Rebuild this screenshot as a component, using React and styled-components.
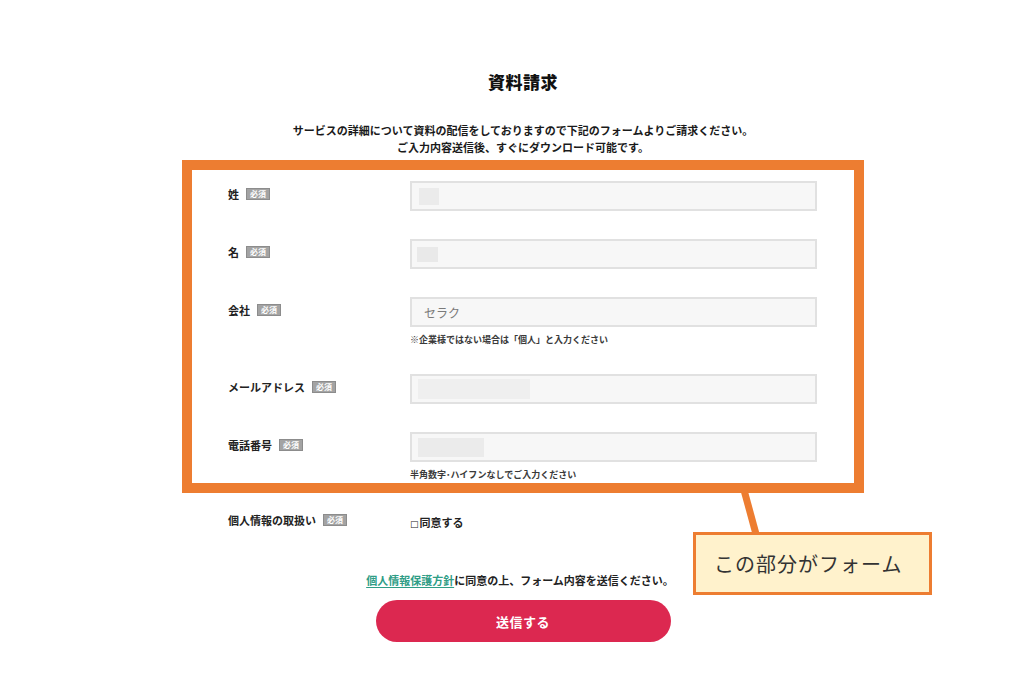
import React from "react";
import styled, { createGlobalStyle } from "styled-components";

const Global = createGlobalStyle`
  html, body { margin: 0; padding: 0; background: #fff; }
  body { font-family: "Noto Sans CJK JP", "Noto Sans", sans-serif; color: #222; }
`;

const ORANGE = "#ed7d31";

const Page = styled.div`
  position: relative;
  width: 1024px;
  height: 673px;
  overflow: hidden;
  background: #fff;
`;

const Column = styled.div`
  width: 682px;
  margin-left: 182px;
  display: flex;
  flex-direction: column;
`;

const Title = styled.h1`
  margin: 70px 0 0;
  height: 24px;
  font-size: 17px;
  line-height: 24px;
  font-weight: 900;
  letter-spacing: 0.5px;
  text-align: center;
  color: #111;
`;

const Lead = styled.p`
  margin: 28px 0 0;
  font-size: 11px;
  line-height: 17px;
  font-weight: 700;
  text-align: center;
  color: #1a1a1a;
`;

const Frame = styled.section`
  margin-top: 4px;
  box-sizing: border-box;
  width: 682px;
  border: 10px solid ${ORANGE};
  padding: 11px 37px 2px 36px;
  display: flex;
  flex-direction: column;
  gap: 28px;
`;

const FieldRow = styled.div`
  display: grid;
  grid-template-columns: 182px 407px;
  align-items: start;
  padding-left: ${(p) => (p.$outside ? "46px" : "0")};
  margin-top: ${(p) => (p.$outside ? "19px" : "0")};
`;

const Label = styled.div`
  display: flex;
  align-items: center;
  gap: 7px;
  padding-top: ${(p) => (p.$flush ? "0" : "5px")};
  font-size: 11px;
  line-height: 16px;
  font-weight: 700;
  color: #222;
`;

const Badge = styled.span`
  display: inline-flex;
  align-items: center;
  justify-content: center;
  box-sizing: border-box;
  width: 24px;
  height: 12px;
  font-size: 8px;
  line-height: 10px;
  font-weight: 700;
  color: #fff;
  background: #a3a3a3;
  border: 1px solid #8c8c8c;
`;

const InputCol = styled.div`
  display: flex;
  flex-direction: column;
`;

const Field = styled.div`
  box-sizing: border-box;
  height: 30px;
  border: 2px solid #e1e1e1;
  background: #f7f7f7;
  display: flex;
  align-items: center;
  padding-left: ${(p) => p.$pad || "7px"};
  font-size: 12px;
  color: #7a7a7a;
`;

const Redact = styled.span`
  display: block;
  width: ${(p) => p.$w}px;
  height: ${(p) => p.$h}px;
  background: ${(p) => p.$c || "#ebebeb"};
  filter: blur(0.6px);
`;

const Note = styled.div`
  margin-top: 6px;
  font-size: 9px;
  line-height: 13px;
  font-weight: 700;
  color: #3a3a3a;
`;

const Agree = styled.div`
  padding-top: 2px;
  font-size: 11px;
  line-height: 16px;
  font-weight: 700;
  color: #222;
`;

const Box = styled.span`
  font-family: "DejaVu Sans", sans-serif;
  font-size: 9px;
  font-weight: 400;
  margin-right: 1px;
`;

const Consent = styled.p`
  margin: 40px 0 0;
  padding-right: 6px;
  font-size: 11px;
  line-height: 16px;
  font-weight: 700;
  text-align: center;
  color: #222;
`;

const PolicyLink = styled.a`
  color: #2f9d86;
  text-decoration: underline;
  text-underline-offset: 2px;
`;

const Submit = styled.button`
  align-self: center;
  margin-top: 12px;
  width: 295px;
  height: 42px;
  border: none;
  border-radius: 21px;
  background: #dc2850;
  color: #fff;
  font-family: "Noto Sans CJK JP", sans-serif;
  font-size: 13px;
  font-weight: 700;
  letter-spacing: 0.5px;
  cursor: pointer;
`;

const Connector = styled.svg`
  position: absolute;
  left: 730px;
  top: 488px;
  width: 40px;
  height: 48px;
`;

const Callout = styled.div`
  position: absolute;
  left: 693px;
  top: 532px;
  box-sizing: border-box;
  width: 239px;
  height: 63px;
  border: 3px solid ${ORANGE};
  background: #fff2cc;
  display: flex;
  align-items: center;
  padding-left: 18px;
  font-size: 20px;
  font-weight: 400;
  letter-spacing: 1px;
  color: #333;
`;

const fields = [
  { label: "姓", blob: { w: 20, h: 17, c: "#ebebeb" }, pad: "7px" },
  { label: "名", blob: { w: 21, h: 15, c: "#e9e9e9" }, pad: "5px" },
  { label: "会社", text: "セラク", pad: "12px", note: "※企業様ではない場合は「個人」と入力ください" },
  { label: "メールアドレス", blob: { w: 112, h: 20, c: "#efefef" }, pad: "6px" },
  { label: "電話番号", blob: { w: 66, h: 19, c: "#ebebeb" }, pad: "6px", note: "半角数字･ハイフンなしでご入力ください" },
];

export default function App() {
  return (
    <Page>
      <Global />
      <Column>
        <Title>資料請求</Title>
        <Lead>
          サービスの詳細について資料の配信をしておりますので下記のフォームよりご請求ください。
          <br />
          ご入力内容送信後、すぐにダウンロード可能です。
        </Lead>
        <Frame>
          {fields.map((f) => (
            <FieldRow key={f.label}>
              <Label>
                {f.label}
                <Badge>必須</Badge>
              </Label>
              <InputCol>
                <Field $pad={f.pad}>
                  {f.text ? f.text : <Redact $w={f.blob.w} $h={f.blob.h} $c={f.blob.c} />}
                </Field>
                {f.note && <Note>{f.note}</Note>}
              </InputCol>
            </FieldRow>
          ))}
        </Frame>
        <FieldRow $outside>
          <Label $flush>
            個人情報の取扱い
            <Badge>必須</Badge>
          </Label>
          <Agree>
            <Box>□</Box>同意する
          </Agree>
        </FieldRow>
        <Consent>
          <PolicyLink href="#">個人情報保護方針</PolicyLink>に同意の上、フォーム内容を送信ください。
        </Consent>
        <Submit type="button">送信する</Submit>
      </Column>
      <Connector viewBox="0 0 40 48">
        <line x1="14" y1="2" x2="26" y2="46" stroke={ORANGE} strokeWidth="7" />
      </Connector>
      <Callout>この部分がフォーム</Callout>
    </Page>
  );
}
